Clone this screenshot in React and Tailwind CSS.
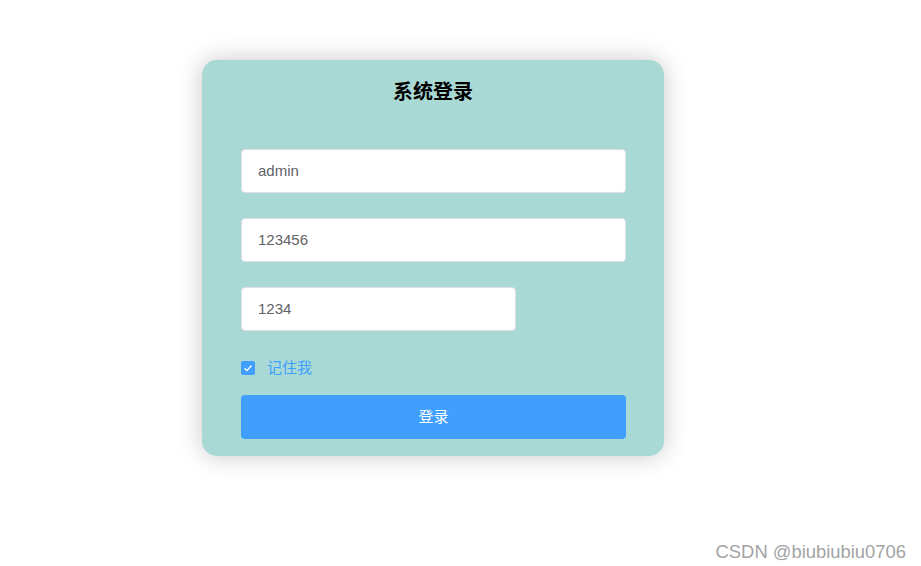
export default function App() {
  return (
    <div className="relative h-[566px] w-[921px] bg-white font-['Liberation_Sans','Noto_Sans_CJK_SC',sans-serif]">
      <div className="ml-[202px] pt-[60px]">
        <div className="w-[462px] h-[396px] rounded-[15px] bg-[#a8d9d5] shadow-[0_0_25px_#cac6c6] px-[39px] pt-[20px]">
          <h3 className="text-center text-[20px] leading-[24px] font-bold text-black mb-[45px]">系统登录</h3>

          <div className="flex flex-col gap-[25px]">
            <input
              defaultValue="admin"
              className="w-[385px] h-[44px] rounded-[4px] border border-[#dcdfe6] bg-white px-[16px] pb-[2px] text-[15px] text-[#606266] outline-none"
            />
            <input
              defaultValue="123456"
              className="w-[385px] h-[44px] rounded-[4px] border border-[#dcdfe6] bg-white px-[16px] pb-[2px] text-[15px] text-[#606266] outline-none"
            />
            <input
              defaultValue="1234"
              className="w-[275px] h-[44px] rounded-[4px] border border-[#dcdfe6] bg-white px-[16px] pb-[2px] text-[15px] text-[#606266] outline-none"
            />
          </div>

          {/* remember me */}
          <label className="flex items-center gap-[12px] mt-[30px] h-[14px]">
            <span className="w-[14px] h-[14px] rounded-[2px] bg-[#409eff] flex items-center justify-center">
              <svg width="12" height="12" viewBox="0 0 12 12" fill="none">
                <path d="M2.5 6.3 L5 8.6 L9.5 3.5" stroke="white" strokeWidth="1.3" />
              </svg>
            </span>
            <span className="text-[15px] text-[#409eff] leading-[14px]">记住我</span>
          </label>

          <button className="mt-[20px] w-[385px] h-[44px] rounded-[4px] bg-[#409eff] text-white text-[15px]">
            登录
          </button>
        </div>
      </div>

      <span className="absolute right-[15px] top-[538px] text-[18.4px] text-[#a3a3a3] [text-shadow:0_0_1px_#fff]">
        CSDN @biubiubiu0706
      </span>
    </div>
  )
}
